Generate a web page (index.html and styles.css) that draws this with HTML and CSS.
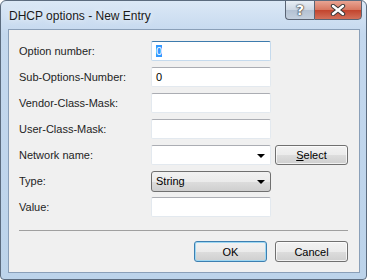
FILE: index.html
```html
<!DOCTYPE html>
<html lang="en">
<head>
    <meta charset="UTF-8">
    <title>DHCP options - New Entry</title>
    <link rel="stylesheet" href="styles.css">
</head>
<body>
    <div class="window">
        <div class="titlebar">
            <span class="title">DHCP options - New Entry</span>
            <div class="caption-buttons">
                <div class="cbtn help">?</div>
                <div class="cbtn close">
                    <svg width="16" height="12" viewBox="0 0 16 12">
                        <path d="M3 2 L13 10 M13 2 L3 10" stroke="#3a3a3a" stroke-width="4.4" stroke-linecap="round"/>
                        <path d="M3 2 L13 10 M13 2 L3 10" stroke="#ffffff" stroke-width="2.4" stroke-linecap="round"/>
                    </svg>
                </div>
            </div>
        </div>

        <div class="client">
            <div class="form">
                <label>Option number:</label>
                <div class="field focused"><span class="selected">0</span></div>
                <span></span>

                <label>Sub-Options-Number:</label>
                <div class="field">0</div>
                <span></span>

                <label>Vendor-Class-Mask:</label>
                <div class="field"></div>
                <span></span>

                <label>User-Class-Mask:</label>
                <div class="field"></div>
                <span></span>

                <label>Network name:</label>
                <div class="field combo"><span class="arrow"></span></div>
                <button class="btn"><u>S</u>elect</button>

                <label>Type:</label>
                <div class="dropdown">String<span class="arrow"></span></div>
                <span></span>

                <label>Value:</label>
                <div class="field"></div>
                <span></span>
            </div>

            <div class="separator"></div>

            <div class="actions">
                <button class="btn default">OK</button>
                <button class="btn">Cancel</button>
            </div>
        </div>
    </div>
</body>
</html>
```

FILE: styles.css
```css
* {
    margin: 0;
    padding: 0;
    box-sizing: border-box;
}

body {
    font-family: 'Liberation Sans', Arial, sans-serif;
    font-size: 11px;
    color: #000;
    background: #fff;
}

.window {
    width: 367px;
    height: 280px;
    border: 1px solid #5b6b7e;
    border-radius: 6px 6px 4px 4px;
    background: linear-gradient(to bottom, #dbe8f6 0%, #c4d8ee 12%, #bcd3ea 100%);
    display: flex;
    flex-direction: column;
    overflow: hidden;
}

.titlebar {
    height: 28px;
    display: flex;
    justify-content: space-between;
    align-items: flex-start;
    padding-left: 8px;
    padding-right: 4px;
}

.title {
    font-size: 12px;
    color: #1a1a1a;
    margin-top: 8px;
    text-shadow: 0 0 6px rgba(255,255,255,0.9);
}

.caption-buttons {
    display: flex;
    margin-top: -1px;
}

.cbtn {
    height: 20px;
    border: 1px solid #5a6474;
    display: flex;
    align-items: center;
    justify-content: center;
}

.help {
    width: 29px;
    border-radius: 0 0 0 4px;
    border-right: none;
    background: linear-gradient(to bottom, #e8eef5 0%, #cdd7e3 50%, #b3c1d2 51%, #c4d0de 100%);
    color: #fff;
    font-family: 'DejaVu Sans', sans-serif;
    font-weight: bold;
    font-size: 14px;
    text-shadow: 0 0 1px #333, 0 0 1px #333, 0 0 2px #333;
}

.close {
    width: 48px;
    border-radius: 0 0 4px 0;
    background: linear-gradient(to bottom, #e8a493 0%, #d7765f 50%, #c2442d 51%, #d2705a 100%);
}

.client {
    flex: 1;
    margin: 0 6px 6px 7px;
    border: 1px solid #8a9fb8;
    background: #f0f0f0;
    padding: 11px 11px 0 10px;
}

.form {
    display: grid;
    grid-template-columns: 128px 120px 73px;
    grid-auto-rows: 20px;
    column-gap: 4px;
    row-gap: 6px;
    align-items: center;
}

.form label {
    color: #1e1e1e;
}

.field {
    height: 20px;
    background: #fff;
    border: 1px solid #e3e9ef;
    border-top-color: #abadb3;
    border-radius: 2px;
    padding: 0 4px;
    line-height: 18px;
    position: relative;
}

.field.focused {
    border-color: #c5daed;
    border-top-color: #3d7bad;
}

.selected {
    background: #3399ff;
    color: #fff;
}

.arrow {
    position: absolute;
    right: 5px;
    top: 8px;
    width: 0;
    height: 0;
    border-left: 4px solid transparent;
    border-right: 4px solid transparent;
    border-top: 4px solid #000;
}

.dropdown {
    height: 21px;
    position: relative;
    border: 1px solid #707070;
    border-radius: 3px;
    background: linear-gradient(to bottom, #f2f2f2 0%, #ebebeb 50%, #dddddd 51%, #cfcfcf 100%);
    padding: 0 4px;
    line-height: 19px;
}

.btn {
    height: 20px;
    font: inherit;
    color: #000;
    border: 1px solid #707070;
    border-radius: 3px;
    background: linear-gradient(to bottom, #f2f2f2 0%, #ebebeb 50%, #dddddd 51%, #cfcfcf 100%);
    box-shadow: inset 0 0 0 1px rgba(255,255,255,0.7);
}

.btn.default {
    border-color: #3c7fb1;
    box-shadow: inset 0 0 0 1px #9ed7f2;
}

.separator {
    margin-top: 13px;
    border-top: 1px solid #a0a0a0;
}

.actions {
    display: flex;
    justify-content: flex-end;
    gap: 8px;
    margin-top: 10px;
}

.actions .btn {
    width: 73px;
    height: 21px;
}
```
